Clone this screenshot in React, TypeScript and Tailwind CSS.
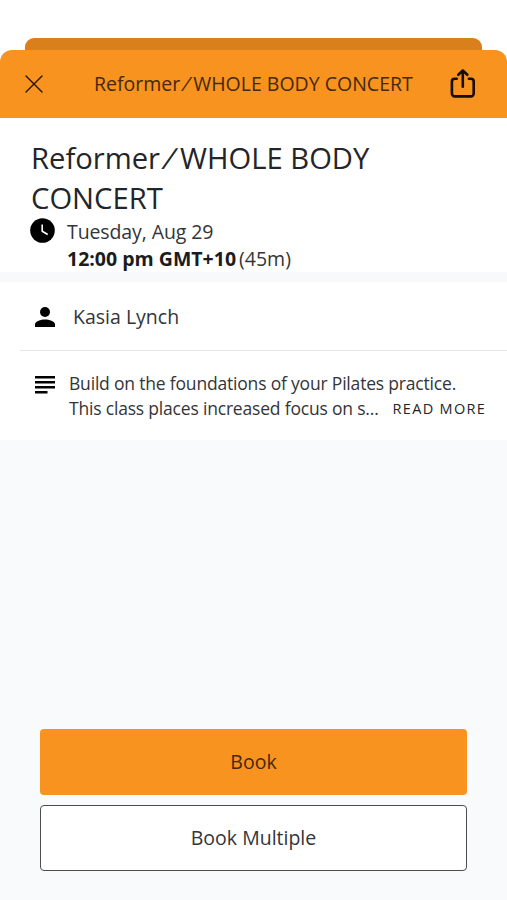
function Slash({ className }: { className: string }) {
  return <span className={`inline-block text-center -skew-x-[18deg] ${className}`}>/</span>;
}

export default function App() {
  return (
    <div className="flex h-[900px] w-[507px] flex-col overflow-hidden bg-white pt-[38px] font-['Open_Sans','Noto_Sans',sans-serif] text-[#333538]">
      <div className="mx-[25px] h-3 shrink-0 rounded-t-[9px] bg-[#d9801c]" />
      <header className="flex h-[68px] shrink-0 items-center rounded-t-[12px] bg-[#f7931e] pl-[25px] pr-[31px]">
        <svg width="18" height="18" viewBox="0 0 18 18" fill="none" stroke="#241505" strokeWidth="1.4" strokeLinecap="round">
          <path d="M1 1l16 16M17 1L1 17" />
        </svg>
        <h1 className="ml-[51px] whitespace-nowrap text-[19.500px] leading-7 text-[#45290c]">
          <span>Reformer</span><Slash className="w-[13px]" /><span>WHOLE BODY CONCERT</span>
        </h1>
        <svg className="ml-auto" width="26" height="32" viewBox="0 0 26 32" fill="none" stroke="#160d03" strokeWidth="2.6" strokeLinecap="round" strokeLinejoin="round">
          <path d="M6.700 10.700H4.700A2.800 2.800 0 0 0 1.900 13.500V25.600A2.800 2.800 0 0 0 4.700 28.400H20.900A2.800 2.800 0 0 0 23.700 25.600V13.500A2.800 2.800 0 0 0 20.900 10.700H18.900M12.800 18.700V2.600M8.300 6.800l4.500-4.300 4.500 4.300" />
        </svg>
      </header>

      <section className="h-[154px] shrink-0 pl-[30px] pt-5">
        <h2 className="pl-px text-[29.200px] leading-10 text-[#232528]">
          <span>Reformer</span><Slash className="w-[20px]" /><span>WHOLE BODY</span><br /><span>CONCERT</span>
        </h2>
        <div className="flex gap-3">
          <svg width="25" height="25" viewBox="0 0 25 25" fill="none">
            <circle cx="12.500" cy="12.500" r="12.300" fill="#000" />
            <path d="M12.200 6.500v6.800l5.500 3.200" stroke="#fff" strokeWidth="1.600" />
          </svg>
          <div className="text-[19.500px] leading-[27px]">
            <p className="tracking-[-0.100px]">Tuesday, Aug 29</p>
            <p className="whitespace-nowrap"><b className="text-[#1b1c1e]">12:00 pm GMT+10</b><span className="ml-[3px]">(45m)</span></p>
          </div>
        </div>
      </section>

      <div className="h-[10px] shrink-0 bg-[#f8f9fa]" />

      <section className="shrink-0">
        <div className="flex h-[68px] items-center gap-[18px] pl-[35px] pt-0.5">
          <svg width="20" height="20" viewBox="0 0 20 20">
            <circle cx="10" cy="5" r="5" />
            <path d="M0 20v-2.500C0 14 6 12.500 10 12.500S20 14 20 17.500V20z" />
          </svg>
          <span className="text-[19.500px]">Kasia Lynch</span>
        </div>
        <div className="ml-[20px] h-px bg-[#e5e6e7]" />
        <div className="flex h-[89px] gap-[14px] pl-[35px] pt-[20px]">
          <svg className="mt-[5px]" width="20" height="18" viewBox="0 0 20 18">
            <path d="M0 0h20v2.400H0zM0 5h20v2.400H0zM0 10h20v2.400H0zM0 15h12.500v2.400H0z" />
          </svg>
          <div className="whitespace-nowrap text-[17.500px] leading-[25px] tracking-[-0.190px]">
            <p>Build on the foundations of your Pilates practice.</p>
            <p className="flex"><span>This class places increased focus on s...</span><span className="ml-[14px] text-[14.500px] tracking-[1.300px] text-[#232528]">READ MORE</span></p>
          </div>
        </div>
      </section>

      <main className="flex grow flex-col justify-end gap-[10px] bg-[#f8fafc] px-[40px] pb-[29px] text-[19.500px]">
        <button className="h-[66px] rounded-[4px] bg-[#f7931e] text-[#44290c]">Book</button>
        <button className="h-[66px] rounded-[4px] border-[1.500px] border-[#4b4d51] bg-white">Book Multiple</button>
      </main>
    </div>
  );
}
